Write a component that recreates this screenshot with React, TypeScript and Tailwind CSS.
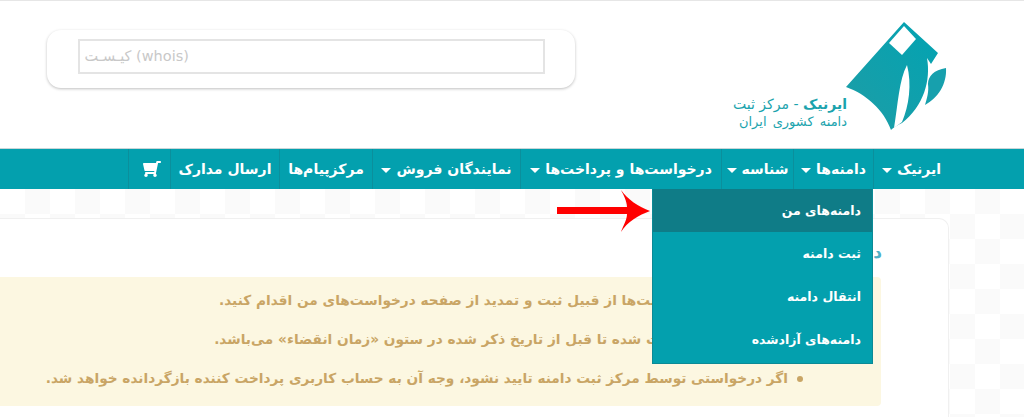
import { FaShoppingCart } from 'react-icons/fa';

const FONT = "font-['DejaVu_Sans','Noto_Sans',sans-serif]";

const navItems = [
  { label: 'ایرنیک', caret: true, w: 'w-[76px]' },
  { label: 'دامنه‌ها', caret: true, w: 'w-[80px]' },
  { label: 'شناسه', caret: true, w: 'w-[72px]' },
  { label: 'درخواست‌ها و پرداخت‌ها', caret: true, w: 'w-[201px]' },
  { label: 'نمایندگان فروش', caret: true, w: 'w-[148px]' },
  { label: 'مرکزپیام‌ها', caret: false, w: 'w-[93px]' },
  { label: 'ارسال مدارک', caret: false, w: 'w-[109px]' },
];

const menuItems = ['دامنه‌های من', 'ثبت دامنه', 'انتقال دامنه', 'دامنه‌های آزادشده'];

const notes = [
  'برای پیگیری درخواست‌ها از قبیل ثبت و تمدید از صفحه درخواست‌های من اقدام کنید.',
  'مدت اعتبار دامنه ثبت شده تا قبل از تاریخ ذکر شده در ستون «زمان انقضاء» می‌باشد.',
  'اگر درخواستی توسط مرکز ثبت دامنه تایید نشود، وجه آن به حساب کاربری پرداخت کننده بازگردانده خواهد شد.',
];

function Logo() {
  return (
    <svg width="101" height="110" viewBox="0 0 101 110" className="shrink-0">
      <defs>
        <linearGradient id="logoFill" x1="1" y1="0" x2="0" y2="1">
          <stop offset="0" stopColor="#02a3b2" />
          <stop offset="1" stopColor="#1e9da6" />
        </linearGradient>
      </defs>
      <path
        d="M58 0 L92 31 L85 42 L81 36 C85 58 78 84 56 101 C50 104 47 106 45 108 C38 88 20 72 0 65 Z"
        fill="url(#logoFill)"
      />
      <path d="M58 4 L70 17 L56 33 L43 21 Z" fill="#fff" />
      <path d="M61 43 C53 58 52 82 48 106 L56 100 C63 84 66 62 61 43 Z" fill="#fff" />
      <path d="M100 46 C88 48 82 54 82 62 C83 70 81 76 79 83 C92 76 101 62 100 46 Z" fill="#17a0ad" />
    </svg>
  );
}

export default function App() {
  return (
    <div dir="rtl" className={`relative h-[417px] overflow-hidden bg-white ${FONT}`}>
      <header className="flex h-[148px] items-start border-t border-[#e6e6e6] pr-[77px]">
        <div className="mt-[21px] flex items-start">
          <Logo />
          <div className="mr-[-1px] mt-[73px] text-[13px] leading-[18px] text-[#1ba3ad]">
            <div className="text-[14px]"><span className="font-bold">ایرنیک</span> - مرکز ثبت</div>
            <div className="[word-spacing:2px]">دامنه کشوری ایران</div>
          </div>
        </div>
        <div className="ml-[47px] mr-auto mt-[29px] flex h-[58px] w-[528px] justify-center rounded-[14px] bg-white pt-[9px] shadow-[0_1px_3px_rgba(0,0,0,0.25)]">
          <div
            dir="ltr"
            className="flex h-[35px] w-[467px] items-center border-2 border-[#e4e4e4] px-[5px] text-[14.5px] text-[#c8c8c8]"
          >
            کیـسـت (whois)
          </div>
        </div>
      </header>

      <nav className="flex h-[41px] border-t border-[#c9d6d8] bg-[#03a0ae] pr-[75px] text-[14px] font-bold text-white">
        {navItems.map((item) => (
          <div
            key={item.label}
            className={`flex shrink-0 items-center justify-center gap-[5px] border-l border-[#0b8f9c] ${item.w}`}
          >
            <span className="whitespace-nowrap">{item.label}</span>
            {item.caret && <span className="mt-[2px] border-x-[5px] border-t-[5px] border-x-transparent border-t-white" />}
          </div>
        ))}
        <div className="flex w-[42px] shrink-0 items-center justify-center border-l border-[#0b8f9c] pl-[5px]">
          <FaShoppingCart className="-scale-x-100 text-[18px]" />
        </div>
      </nav>

      <main className="h-[228px] bg-[conic-gradient(#fafafa_25%,#ffffff_0_50%,#fafafa_0_75%,#ffffff_0)] bg-[length:50px_50px] pr-[75px] pt-[29px]">
        <div className="h-full rounded-tr-[10px] border-r border-t border-[#f0f0f0] bg-white pt-[25px]">
          <h1 className="pr-[66px] text-[17px] font-bold leading-[16px] text-[#4fb0c6]">دامنه</h1>
          <div className="mr-[67px] mt-[17px] flex h-[129px] flex-col gap-[16px] rounded-r-[4px] bg-[#fcf7e1] pr-[78px] pt-[12px] text-[13.7px] font-bold leading-[23px] text-[#c9a565]">
            {notes.map((note) => (
              <div key={note} className="flex items-center gap-[9px] whitespace-nowrap">
                <span className="h-[6px] w-[6px] shrink-0 rounded-full bg-[#c9a565]" />
                <p>{note}</p>
              </div>
            ))}
          </div>
        </div>
      </main>

      {/* open menu */}
      <div className="absolute left-[652px] top-[189px] flex h-[175px] w-[221px] flex-col border border-t-0 border-[#0b8a96] bg-[#03a0ae] text-[12.5px] font-bold text-white">
        {menuItems.map((label, i) => (
          <div
            key={label}
            className={`flex h-[43px] items-center pr-[11px] pt-[1px] ${i === 0 ? 'bg-[#0f7c87]' : ''}`}
          >
            {label}
          </div>
        ))}
      </div>

      {/* red arrow annotation */}
      <svg width="96" height="44" viewBox="0 0 96 44" className="absolute left-[557px] top-[189px]">
        <path d="M0 18 H70 C70 12 66 5 64 1 C70 10 82 18 93 22 C82 26 70 33 64 43 C66 37 70 31 70 25 H0 Z" fill="#ff0000" />
      </svg>
    </div>
  );
}
